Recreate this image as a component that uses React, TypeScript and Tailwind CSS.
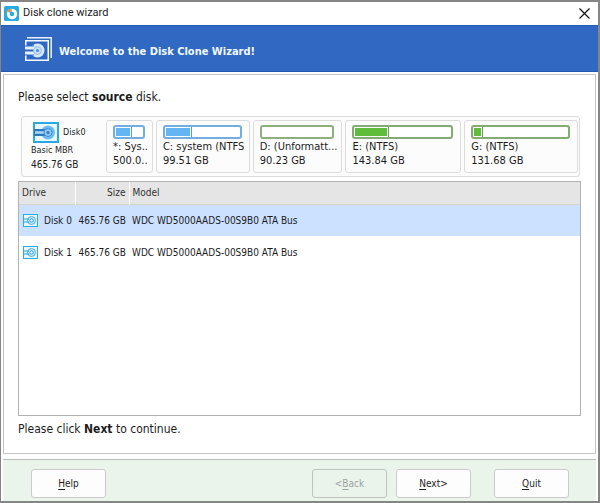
import { useState } from "react";

type Partition = {
  name: string;
  size: string;
  used: number;
  tone: "blue" | "green" | "empty";
};

const partitions: Partition[] = [
  { name: "*: Sys..", size: "500.0..", used: 60, tone: "blue" },
  { name: "C: system (NTFS", size: "99.51 GB", used: 36, tone: "blue" },
  { name: "D: (Unformatt...", size: "90.23 GB", used: 0, tone: "empty" },
  { name: "E: (NTFS)", size: "143.84 GB", used: 36, tone: "green" },
  { name: "G: (NTFS)", size: "131.68 GB", used: 10, tone: "green" },
];

const disks = [
  { name: "Disk 0", size: "465.76 GB", model: "WDC WD5000AADS-00S9B0 ATA Bus" },
  { name: "Disk 1", size: "465.76 GB", model: "WDC WD5000AADS-00S9B0 ATA Bus" },
];

function AppLogo() {
  return (
    <svg width="15" height="15" viewBox="0 0 15 15" aria-hidden="true">
      <rect width="15" height="15" rx="1.5" fill="#29aae1" />
      <circle cx="8" cy="8" r="3.700" fill="none" stroke="#fff" strokeWidth="3" />
      <path d="M2 6.500C2.500 4 5 2.500 7.500 2.800L8 5.500 5.500 6.500 4 6Z" fill="#d99a5b" />
      <path d="M5 7l3-1.500L8.500 8Z" fill="#29aae1" />
    </svg>
  );
}

function HeaderIcon() {
  return (
    <svg width="27" height="24" viewBox="0 0 27 24" aria-hidden="true">
      <path d="M2 .75H26.200V21" fill="none" stroke="#eaf3ff" strokeWidth="1.500" />
      <rect x=".75" y="3.750" width="22.500" height="19.500" fill="#2f68c3" stroke="#fff" strokeWidth="1.500" />
      <circle cx="12.500" cy="13.500" r="7" fill="#d5e9fa" />
      <rect x="0" y="8.500" width="9" height="10" fill="#2f68c3" />
      <path d="M0 9.500H9V12.500H0ZM0 14.500H9V17.500H0Z" fill="#e6f2fd" />
      <circle cx="12.500" cy="13.500" r="4" fill="#c6e0f7" stroke="#8ab5e6" strokeWidth=".8" />
      <circle cx="12.500" cy="13.500" r="1.500" fill="#4d8ad6" />
    </svg>
  );
}

function DiskIcon() {
  return (
    <svg className="h-[21px] w-[26px]" viewBox="0 0 26 21" aria-hidden="true">
      <rect x="1" y="1" width="24" height="19" fill="#eaf7fe" stroke="#27a9e3" strokeWidth="2" />
      <circle cx="15" cy="10.500" r="7" fill="#6fbcf0" />
      <path d="M1 7H10.500A3.500 3.500 0 0 1 10.500 14H1Z" fill="#2d78b7" />
      <path d="M2 9.200H11V11.800H2Z" fill="#a9d6f5" />
      <circle cx="15" cy="10.500" r="4" fill="#8dcaf5" stroke="#3a90d2" strokeWidth="1" />
      <circle cx="15" cy="10.500" r="1.500" fill="#2878b9" />
    </svg>
  );
}

function SmallDiskIcon() {
  return (
    <svg className="shrink-0" width="15" height="13" viewBox="0 0 15 13" aria-hidden="true">
      <rect x=".5" y=".5" width="14" height="12" fill="#e8f6fe" stroke="#2fabe4" />
      <circle cx="8.500" cy="6.500" r="4" fill="#c3e6fa" stroke="#4fb6e8" />
      <path d="M0 5H6M0 8H6" stroke="#2c9fdc" strokeWidth="1.200" />
      <circle cx="8.500" cy="6.500" r="1.700" fill="#e8f6fe" stroke="#2c9fdc" />
    </svg>
  );
}

const tones = {
  blue: { frame: "border-[#73aee0]", fill: "bg-[#64b5f3]", edge: "border-[#5b9fd8]" },
  green: { frame: "border-[#86aa73]", fill: "bg-[#5fbd3b]", edge: "border-[#78986b]" },
  empty: { frame: "border-[#8fae80]", fill: "", edge: "" },
};

function PartitionCard({ name, size, used, tone }: Partition) {
  return (
    <div className="min-w-0 rounded-[3px] border border-[#dcdcdc] bg-[#fcfcfc] pt-1 pl-[6px]">
      <div className={`mr-[7px] h-[14px] rounded-[3px] border-2 bg-white ${tones[tone].frame}`}>
        {used > 0 && (
          <div className={`h-full border-r p-px ${tones[tone].edge}`} style={{ width: `${used}%` }}>
            <div className={`h-full ${tones[tone].fill}`} />
          </div>
        )}
      </div>
      <div className="mt-px text-[11px] leading-[14px] whitespace-nowrap">{name}</div>
      <div className="text-[11px] leading-[14px] whitespace-nowrap">{size}</div>
    </div>
  );
}

function WizardButton({ label, hotkey, disabled }: { label: string; hotkey: string; disabled?: boolean }) {
  const [before, after] = label.split(hotkey);
  return (
    <button
      type="button"
      disabled={disabled}
      className="h-[29px] w-[75px] rounded-[3px] border border-[#cbcbcb] bg-[#fdfdfd] text-[10px] disabled:border-[#bfc2bf] disabled:bg-[#ebf4ea] disabled:text-[#9ba2a5]"
    >
      {before}
      <span className="underline underline-offset-2">{hotkey}</span>
      {after}
    </button>
  );
}

export default function App() {
  const [selected, setSelected] = useState(0);
  return (
    <div className="flex h-screen flex-col border-y-2 border-r-2 border-l border-[#858585] bg-white font-['DejaVu_Sans_Condensed','DejaVu_Sans',sans-serif] text-[10px] text-[#1c1c1c]">
      <div className="flex h-[23px] shrink-0 items-center pr-[7px] pl-[3px]">
        <AppLogo />
        <h1 className="ml-1 grow font-['Roboto',sans-serif] text-[11px]">Disk clone wizard</h1>
        <button type="button" aria-label="Close" className="p-px">
          <svg width="11" height="11" viewBox="0 0 11 11" aria-hidden="true">
            <path d="M.5.5l10 10M10.500.5l-10 10" stroke="#111" strokeWidth="1.200" />
          </svg>
        </button>
      </div>

      <header className="flex h-[47px] shrink-0 items-center border-y border-[#2459b5] bg-[#3068c2] pl-6">
        <HeaderIcon />
        <h2 className="mt-2 ml-[7px] text-[11px] font-bold text-[#f0f8ff]">Welcome to the Disk Clone Wizard!</h2>
      </header>

      <main className="mx-0.5 mt-0.5 mb-[5px] flex min-h-0 grow flex-col border border-[#c4c4c4] px-[14px] pb-4">
        <p className="mt-[14px] text-xs leading-4">
          Please select <b>source</b> disk.
        </p>

        <section className="mt-[11px] mr-px ml-[3px] flex h-[61px] shrink-0 rounded-[3px] border border-[#dcdcdc] bg-[#fcfcfc] py-[3px] pr-px pl-[3px]">
          <div className="w-[81px] shrink-0 pt-[2px] pl-[6px]">
            <div className="flex items-center gap-1 pl-[2px] text-[9px]">
              <DiskIcon />
              Disk0
            </div>
            <div className="text-[9px] leading-[15px]">Basic MBR</div>
            <div className="text-[10px] leading-[14px]">465.76 GB</div>
          </div>
          <div className="grid min-w-0 grow grid-cols-[47fr_94fr_90fr_116fr_114fr] gap-[3px]">
            {partitions.map((p) => (
              <PartitionCard key={p.name} {...p} />
            ))}
          </div>
        </section>

        <div className="mt-1 min-h-0 grow border border-[#b2b2b2]">
          <table className="w-full table-fixed border-collapse">
            <colgroup>
              <col className="w-[56px]" />
              <col className="w-[54px]" />
              <col />
            </colgroup>
            <thead>
              <tr className="h-[22px] border-b border-[#d4d4d0] bg-[#e5e5e5] text-[#333]">
                <th className="border-r border-white pl-[3px] text-left font-normal">Drive</th>
                <th className="border-r border-white pr-[3px] text-right font-normal">Size</th>
                <th className="pl-[3px] text-left font-normal">Model</th>
              </tr>
            </thead>
            <tbody>
              {disks.map((d, i) => (
                <tr
                  key={d.name}
                  onClick={() => setSelected(i)}
                  className={`h-8 whitespace-nowrap ${selected === i ? "bg-[#cbe1ff]" : ""}`}
                >
                  <td className="pl-1">
                    <div className="flex items-center gap-[6px]">
                      <SmallDiskIcon />
                      {d.name}
                    </div>
                  </td>
                  <td className="pr-[3px] text-right">{d.size}</td>
                  <td className="pl-[3px]">{d.model}</td>
                </tr>
              ))}
            </tbody>
          </table>
        </div>

        <p className="mt-[5px] text-xs leading-4">
          Please click <b>Next</b> to continue.
        </p>
      </main>

      <footer className="mx-0.5 flex h-[42px] shrink-0 items-start border-t border-[#b9bfb8] bg-[#ebf4ea] pt-[9px] pr-[27px] pl-7">
        <WizardButton label="Help" hotkey="H" />
        <div className="ml-auto flex gap-[9px]">
          <WizardButton label="<Back" hotkey="B" disabled />
          <WizardButton label="Next>" hotkey="N" />
        </div>
        <div className="ml-[23px]">
          <WizardButton label="Quit" hotkey="Q" />
        </div>
      </footer>
    </div>
  );
}
